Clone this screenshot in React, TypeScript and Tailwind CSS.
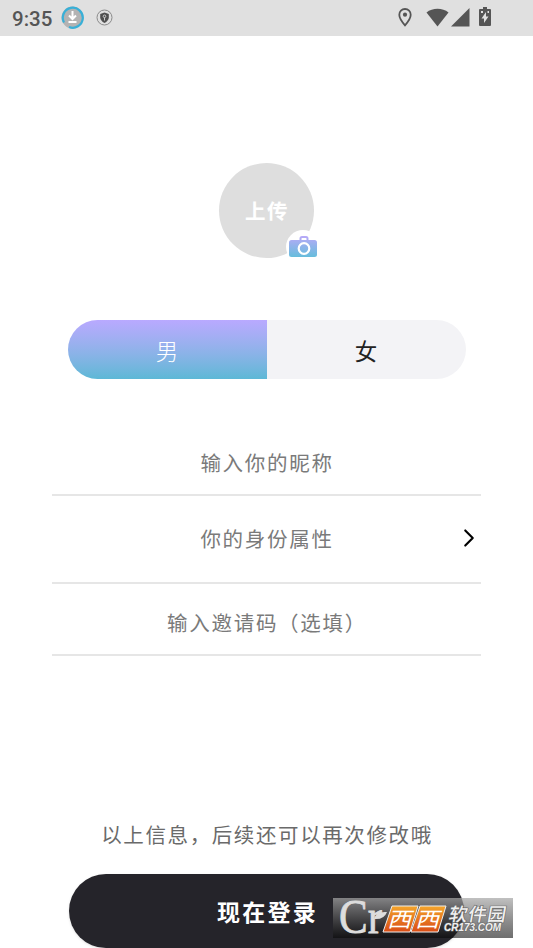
import { ChevronRight } from "lucide-react";

const FIELDS = [
  { label: "输入你的昵称", box: "h-[68px] pt-[2px]", arrow: false },
  { label: "你的身份属性", box: "h-[88px] pb-[2px]", arrow: true },
  { label: "输入邀请码（选填）", box: "h-[72px] pt-[6px]", arrow: false },
];

function StatusBar() {
  return (
    <header className="flex h-9 items-center bg-[#e0e0e0] pl-3 text-[#555]">
      <span className="w-[49px] pt-0.5 font-[Roboto] text-[20.5px] leading-none font-medium">9:35</span>
      <svg className="mb-0.5 size-[23px]" viewBox="0 0 23 23" fill="none">
        <circle cx="11.5" cy="11.5" r="10" fill="#b3b3b3" stroke="#b3b3b3" strokeWidth="2" />
        <path d="M3 16.500A10 10 0 1 1 8 21" stroke="#38b0d8" strokeWidth="2.200" />
        <path d="M11.5 5v7M8 9.5l3.5 3.5L15 9.5M7.5 16h8" stroke="#fff" strokeWidth="2" />
      </svg>
      <svg className="mb-px ml-3 size-[17px]" viewBox="0 0 17 17" fill="none">
        <circle cx="8.5" cy="8.5" r="7.5" stroke="#8b8b8b" />
        <path d="M8.5 3.5l4.3 1.4v3.4c0 2.6-1.8 4.5-4.3 5.6-2.5-1.1-4.3-3-4.3-5.6V4.9z" fill="#505050" />
        <circle cx="8.5" cy="7.3" r="1.3" stroke="#ccc" />
        <path d="M8.5 8.5v3" stroke="#ccc" />
      </svg>
      <svg className="mb-px ml-[285px] h-[19px] w-[14px]" viewBox="0 0 14 19" fill="none">
        <path d="M7 1a5.7 5.7 0 0 0-5.7 5.8C1.3 11 7 17.3 7 17.3S12.7 11 12.7 6.8A5.7 5.7 0 0 0 7 1z" stroke="currentColor" strokeWidth="1.8" />
        <circle cx="7" cy="6.7" r="2.1" fill="currentColor" />
      </svg>
      <svg className="mb-0.5 ml-[14px] h-[19px] w-[23px]" viewBox="0 0 23 19" fill="currentColor">
        <path d="M.5 4.5C6.5-.5 16.5-.5 22.5 4.5L11.5 18.5z" />
      </svg>
      <svg className="mb-px ml-[2px] size-[19px]" viewBox="0 0 19 19" fill="currentColor">
        <path d="M18.5 0v18.5H0z" />
      </svg>
      <svg className="mb-0.5 ml-[9px] h-5 w-3" viewBox="0 0 12 20" fill="currentColor">
        <path fillRule="evenodd" d="M4 0h4v2h3q1 0 1 1v15q0 1-1 1H1q-1 0-1-1V3q0-1 1-1h3zM7 5l-4.5 6.5H5V16l4.5-6.500H7zM2 4h2v2H2zM8.500 4h1.500v2H8.500z" />
      </svg>
    </header>
  );
}

function Avatar() {
  return (
    <div className="relative mx-auto mt-[127px] flex size-[95px] items-center justify-center rounded-full bg-[#dedede]">
      <span className="pl-px text-[20.5px] font-bold tracking-[1.5px] text-white">上传</span>
      <div className="absolute top-[67px] left-[67px] flex size-[34px] items-center justify-center rounded-full bg-white">
        <svg className="mb-[1px] h-[21px] w-[28px] shrink-0" viewBox="0 0 28 21">
          <defs>
            <linearGradient id="camera" x1="0" y1="0" x2="0" y2="21" gradientUnits="userSpaceOnUse">
              <stop stopColor="#b9a9f8" />
              <stop offset="1" stopColor="#66bddc" />
            </linearGradient>
          </defs>
          <path d="M11.500 4V2.500q0-1.500 1.500-1.500h4q1.500 0 1.500 1.500V4" fill="none" stroke="url(#camera)" strokeWidth="2" />
          <rect y="4" width="28" height="17" rx="2.5" fill="url(#camera)" />
          <circle cx="15" cy="12.5" r="5.3" fill="none" stroke="#fff" strokeWidth="2.2" />
        </svg>
      </div>
    </div>
  );
}

function Watermark() {
  return (
    <div className="absolute top-[24px] left-[264px] h-10 w-[180px] bg-linear-to-b from-[#a8a8a8]/72 to-[#080808]/58">
      <svg className="size-full overflow-visible" viewBox="0 0 180 40">
        <defs>
          <linearGradient id="tile" x1="0" y1="0" x2="0" y2="1">
            <stop stopColor="#f3a52b" />
            <stop offset="1" stopColor="#d94c16" />
          </linearGradient>
        </defs>
        <text x="6" y="35" fontSize="48" textLength="43" lengthAdjust="spacingAndGlyphs" fill="#ddd" stroke="#ddd" strokeWidth="0.8" fontFamily="Liberation Serif">
          Cr
        </text>
        <path d="M41 21q2-8 13-7-3 8-13 7" fill="#ddd" />
        <g fill="url(#tile)" stroke="#eee" strokeWidth="1">
          <path d="M59 8h26l-8 26H50z" />
          <path d="M87 8h26l-8 26H78z" />
        </g>
        <g fill="#fff" fontSize="21">
          <text transform="translate(54 28.500) skewX(-16) scale(1.150 1)">西</text>
          <text transform="translate(82 28.500) skewX(-16) scale(1.150 1)">西</text>
        </g>
        <g fill="#f0f0f0" stroke="#666" strokeWidth="1.2" paintOrder="stroke">
          <text transform="translate(115 23) skewX(-10)" fontSize="18.5" fontWeight="500" textLength="57">软件园</text>
          <text x="111" y="33" fontSize="10" fontWeight="700" fontStyle="italic" textLength="57" lengthAdjust="spacingAndGlyphs" fontFamily="Liberation Sans">CR173.COM</text>
        </g>
      </svg>
    </div>
  );
}

export default function App() {
  return (
    <div className="h-[948px] w-[533px] overflow-hidden bg-white font-['Noto_Sans_CJK_SC','Noto_Sans',sans-serif]">
      <StatusBar />
      <Avatar />
      <div className="mx-auto mt-[62px] flex h-[59px] w-[398px] overflow-hidden rounded-full text-[22.5px]">
        <button className="flex-1 bg-linear-to-b from-[#b9a9ff] to-[#5cb8d6] pt-0.5 font-light text-white">男</button>
        <button className="flex-1 bg-[#f3f3f6] pt-0.5 text-[#222]">女</button>
      </div>
      <div className="mx-[52px] mt-[49px]">
        {FIELDS.map((f) => (
          <div
            key={f.label}
            className={`relative flex items-center justify-center border-b-2 border-[#e6e6e6] pl-px text-[20.5px] tracking-[1.7px] text-[#7a7a7a] ${f.box}`}
          >
            {f.label}
            {f.arrow && <ChevronRight className="absolute right-[-3px] size-[30px] text-black" strokeWidth={1.7} />}
          </div>
        ))}
      </div>
      <p className="mt-[163px] pl-px text-center text-[20.5px] leading-[30px] tracking-[1.6px] text-[#6a6a6a]">
        以上信息，后续还可以再次修改哦
      </p>
      <div className="relative mx-auto mt-[25px] h-[74px] w-[395px]">
        <button className="size-full rounded-full bg-[#25242a] pl-0.5 text-[23px] font-bold tracking-[2.2px] text-white shadow">
          现在登录
        </button>
        <Watermark />
      </div>
    </div>
  );
}
